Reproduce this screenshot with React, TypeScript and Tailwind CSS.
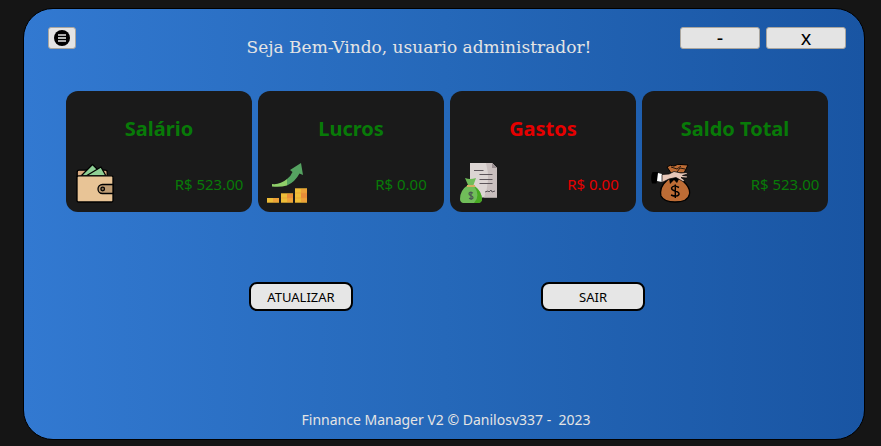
import type { ReactNode } from 'react';

function MenuIcon() {
  return (
    <svg viewBox="0 0 16 16" className="size-4" aria-hidden="true">
      <circle cx="8" cy="8" r="8" fill="#000" />
      <path d="M4 5h8M4 11h8" stroke="#e4e4e4" strokeWidth="1.500" />
      <path d="M4 8h8" stroke="#b5b8b5" strokeWidth="2" />
    </svg>
  );
}

function WalletIcon() {
  return (
    <svg viewBox="-1 0 40 40" className="size-10" aria-hidden="true">
      <g stroke="#000" strokeWidth="1.3" strokeLinejoin="round">
        <rect x="1.2" y="7.2" width="30" height="10" rx="2" fill="#d9ab82" />
        <path d="M5 13 16.5 1.500 28 13z" fill="#8fcf95" />
        <path d="M10 13 25 4l5 9z" fill="#8fcf95" />
        <rect x="1" y="12.8" width="36" height="26.2" rx="1.5" fill="#e8c496" />
        <path d="M37 21.5H26.500a4.500 4.500 0 0 0 0 9H37z" fill="#bf9d74" />
        <circle cx="26.700" cy="26" r="1.800" fill="#8b7355" />
      </g>
    </svg>
  );
}

function ProfitIcon() {
  return (
    <svg viewBox="0 0 40 40" className="size-10" aria-hidden="true">
      <path d="M5 21q8 1 15-5v6.500q-7 2-15 1z" fill="#8fcf69" />
      <path d="M20 16q4-3 5.500-7L23 7 34 0l2 12-3.500-1.500Q28 19 20 22.500z" fill="#55a361" />
      <path d="M0 35h12v5H0zM14 30h12v10H14zM28 25h12v15H28z" fill="#edbd38" />
      <path d="M6 35h6v5H6zM20 30h6v10h-6zM34 25h6v15h-6z" fill="#eda139" />
      <path d="M20 31h6v4h-6zM34 30h6v5h-6z" fill="#e98c39" />
      <path d="M14 35h12M28 30h12M28 35h12" stroke="#e99a37" strokeWidth=".6" />
      <path d="M0 39.500h12M14 39.500h12M28 39.500h12M14 30.500h12M28 25.500h12" stroke="#b48b2c" />
    </svg>
  );
}

function ExpenseIcon() {
  return (
    <svg viewBox="-1 0 40 40" className="size-10" aria-hidden="true">
      <path d="M10 0h22l5 5v29.500H10z" fill="#dcd5d3" />
      <path d="M26 0h6l5 5v29.500H24q7-17 2-34.500z" fill="#c9bfbe" />
      <path d="M32 0v5h5z" fill="#998e91" />
      <path d="M14 7.500h9.500M19.500 11.500h13M19.500 16.500h13M19.500 20.500h13M25 29l3-1 1 1 2-2 1 2 3-1" fill="none" stroke="#5d565b" />
      <path d="M5 15q3 1 5 1 3 0 6-1l-2.500 7Q22 28 22 37q-1 3-4 3H3q-3-1-3-4 0-9 8-14z" fill="#70bd59" />
      <path d="M14 23q8 5 8 14-1 3-4 3h-4q7-7 0-17z" fill="#48a922" />
      <path d="M7 23h8" stroke="#d6ad61" strokeWidth="2" />
      <path d="M13 30q-4-1.500-4 .8 0 1.500 2 1.900 2 .6 2 1.900 0 2-4 .8M11 28.500v8.500" fill="none" stroke="#4b5753" strokeWidth="1.200" />
    </svg>
  );
}

function BalanceIcon() {
  return (
    <svg viewBox="0 0 40 40" className="size-10" aria-hidden="true">
      <g strokeLinejoin="round">
        <path d="M20 10 16 4q3-3 7-1 4-2.500 7-1.500l7 .5-4 8z" fill="#bd6c35" stroke="#000" />
        <path d="m20 4 6 2 4-3m-4 6 3-4 5 1" fill="none" stroke="#000" strokeWidth=".8" />
        <path d="M19 14 12.500 21Q8.500 26 10 33q3 6 14 6 13 0 14.500-8 1-6-5.500-12l-4-5z" fill="#bd6c35" stroke="#000" strokeWidth="1.300" />
        <path d="M1.500 9H7L5.500 20.500H1Q-1 14 1.500 9z" fill="#000" />
        <path d="m7 10 4 1v8l-5-1z" fill="#fff" />
        <path d="m18 15 1 6 4-4 3 3 3-6z" fill="#000" />
        <path d="m11 11.500 7-.5 5-2.500 7 1.500 6-.5.5 1.500-5 1.500 5 .5-.5 2-6-.5 4 3-2 1-7-4-7 1.500-7 3.500H11z" fill="#e7c7b8" stroke="#000" strokeWidth=".7" />
      </g>
      <path d="M28 24.500q-6-3-7.500.5 0 2 3.500 3 4.500 1 4 3.500-2 3-8 .5M24.300 21.500v13.500" fill="none" stroke="#000" strokeWidth="1.400" />
    </svg>
  );
}

type Summary = { title: string; value: string; color: string; icon: ReactNode };

const summaries: Summary[] = [
  { title: 'Salário', value: 'R$ 523.00', color: 'text-[#087a08]', icon: <WalletIcon /> },
  { title: 'Lucros', value: 'R$ 0.00', color: 'text-[#087a08]', icon: <ProfitIcon /> },
  { title: 'Gastos', value: 'R$ 0.00', color: 'text-[#e60000]', icon: <ExpenseIcon /> },
  { title: 'Saldo Total', value: 'R$ 523.00', color: 'text-[#087a08]', icon: <BalanceIcon /> },
];

function SummaryCard({ title, value, color, icon }: Summary) {
  return (
    <article className={`rounded-xl bg-[#1a1a1a] pt-6 pb-[9px] ${color}`}>
      <h2 className="text-center text-[20px] leading-7 font-bold">{title}</h2>
      <div className="mt-5 flex items-center justify-between pl-[9px]">
        {icon}
        <p className="w-[86px] pt-0.5 text-center text-[15px] leading-5">{value}</p>
      </div>
    </article>
  );
}

const windowButton =
  'flex h-[22px] items-center justify-center rounded-[3px] border border-[#aaa69f] bg-[#e4e4e4] text-black';
const actionButton =
  'h-[29px] w-[104px] rounded-lg border-2 border-black bg-[#e6e6e6] text-[13px] leading-5 text-black';

export default function App() {
  return (
    <div className="flex min-h-screen flex-col bg-[#151515] pt-2 pr-4 pb-1.5 pl-[23px] font-['Noto_Sans','Open_Sans',sans-serif]">
      <main className="flex flex-1 flex-col rounded-[30px] border border-black bg-linear-to-r from-[#3279d1] via-[#2568b9] to-[#1955a3] text-[#e4e4e4]">
        <header className="flex items-start pt-[18px] pr-[18px] pl-6">
          <button type="button" aria-label="Menu" className={`${windowButton} w-7`}>
            <MenuIcon />
          </button>
          <h1 className="flex-1 pt-2 pl-[82px] text-center font-['DejaVu_Serif',serif] text-[17px] leading-6">
            Seja Bem-Vindo, usuario administrador!
          </h1>
          <div className="flex gap-1.5">
            <button type="button" className={`${windowButton} w-20 text-[20px]`}>-</button>
            <button type="button" className={`${windowButton} w-20 text-[20px]`}>x</button>
          </div>
        </header>
        <section className="mt-8 grid grid-cols-4 gap-1.5 pr-9 pl-[42px]">
          {summaries.map((summary) => (
            <SummaryCard key={summary.title} {...summary} />
          ))}
        </section>
        <div className="mt-[70px] flex justify-center gap-[188px] pl-1.5">
          <button type="button" className={actionButton}>ATUALIZAR</button>
          <button type="button" className={actionButton}>SAIR</button>
        </div>
        <footer className="mt-auto pb-[9px] pl-1 text-center text-[14px] leading-5 whitespace-pre">
          {'Finnance Manager V2 © Danilosv337 -  2023'}
        </footer>
      </main>
    </div>
  );
}
